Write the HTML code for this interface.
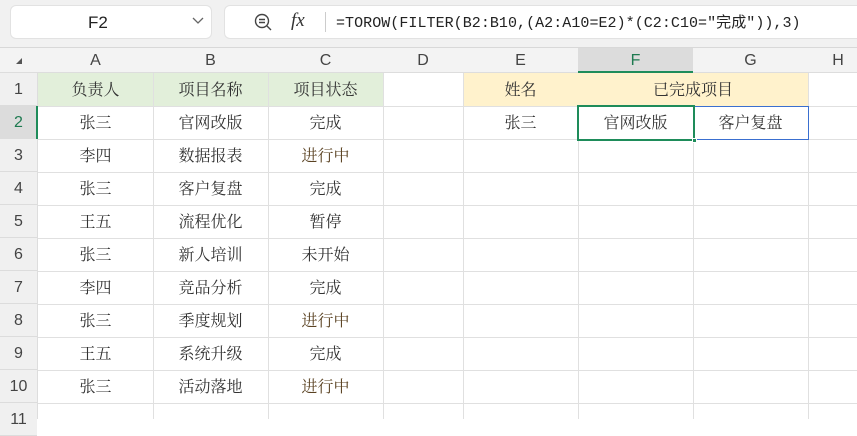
<!DOCTYPE html><html><head><meta charset="utf-8"><style>
body{margin:0;width:857px;height:419px;overflow:hidden;background:#fff;font-family:"Liberation Sans",sans-serif;position:relative}
.a{position:absolute;box-sizing:border-box}
.c{position:absolute;box-sizing:border-box;text-align:center;font-family:"Liberation Serif","Noto Serif CJK SC","Noto Serif CJK JP","Noto Serif CJK TC",serif;font-size:16px;color:#333;line-height:36px;height:33px}
.h{position:absolute;text-align:center;font-size:16px;color:#444;line-height:25px;top:48px;height:25px}
.r{position:absolute;left:0;width:37px;text-align:center;font-size:16px;color:#444;line-height:33px;height:32px;background:#f0f0f0;border-bottom:1px solid #dcdcdc}
</style></head><body>
<div class="a" style="left:0;top:0;width:857px;height:48px;background:#f1f1f1;border-bottom:1px solid #d8d8d8"></div>
<div class="a" style="left:10px;top:5px;width:202px;height:34px;background:#fff;border-radius:6px;border:1px solid #e2e2e2"></div>
<div class="a" style="left:88px;top:13px;font-size:17px;color:#222">F2</div>
<svg class="a" style="left:192px;top:17px" width="12" height="8"><path d="M1 1l5 5 5-5" stroke="#666" fill="none" stroke-width="1.3"/></svg>
<div class="a" style="left:224px;top:5px;width:640px;height:34px;background:#fff;border-radius:6px;border:1px solid #e2e2e2"></div>
<svg class="a" style="left:253px;top:12px" width="20" height="20"><circle cx="9" cy="9" r="6.5" stroke="#444" fill="none" stroke-width="1.4"/><path d="M6 7.5h6M6 10.5h6M14 14l4 4" stroke="#444" stroke-width="1.4"/></svg>
<div class="a" style="left:291px;top:10px;font-family:'Liberation Serif',serif;font-style:italic;font-size:19px;color:#333">fx</div>
<div class="a" style="left:325px;top:12px;width:1px;height:20px;background:#ccc"></div>
<div class="a" style="left:336px;top:11px;font-family:'Liberation Mono','Noto Sans CJK SC',monospace;font-size:15px;color:#222;letter-spacing:0.05px">=TOROW(FILTER(B2:B10,(A2:A10=E2)*(C2:C10="完成")),3)</div>
<!-- header row -->
<div class="a" style="left:0;top:48px;width:857px;height:25px;background:#f3f3f3;border-bottom:1px solid #ddd"></div>
<div class="a" style="left:578px;top:48px;width:115px;height:25px;background:#dcdcdc;border-bottom:2px solid #1e8c5a"></div>
<svg class="a" style="left:14px;top:56px" width="10" height="10"><path d="M8 2v6H2z" fill="#555"/></svg>
<div class="h" style="left:38px;width:115px">A</div><div class="h" style="left:153px;width:115px">B</div><div class="h" style="left:268px;width:115px">C</div><div class="h" style="left:383px;width:80px">D</div><div class="h" style="left:463px;width:115px">E</div><div class="h" style="left:578px;width:115px;color:#1e7a50">F</div><div class="h" style="left:693px;width:115px">G</div><div class="h" style="left:808px;width:60px">H</div>
<!-- row header col -->
<div class="a" style="left:0;top:73px;width:38px;height:346px;background:#f0f0f0;border-right:1px solid #ddd"></div>
<div class="r" style="top:73px">1</div><div class="r" style="top:106px;background:#dcdcdc;color:#1e7a50">2</div><div class="r" style="top:139px">3</div><div class="r" style="top:172px">4</div><div class="r" style="top:205px">5</div><div class="r" style="top:238px">6</div><div class="r" style="top:271px">7</div><div class="r" style="top:304px">8</div><div class="r" style="top:337px">9</div><div class="r" style="top:370px">10</div><div class="r" style="top:403px">11</div>
<div class="a" style="left:36px;top:106px;width:2px;height:33px;background:#1e8c5a"></div>
<!-- fills -->
<div class="a" style="left:38px;top:73px;width:345px;height:33px;background:#e2efda"></div>
<div class="a" style="left:463px;top:73px;width:345px;height:33px;background:#fff2cc"></div>
<!-- grid -->
<svg class="a" style="left:38px;top:73px" width="819" height="346">
<g stroke="#e0e0e0" stroke-width="1">
<path d="M0 33.5H819M0 66.5H819M0 99.5H819M0 132.5H819M0 165.5H819M0 198.5H819M0 231.5H819M0 264.5H819M0 297.5H819M0 330.5H819"/>
<path d="M115.5 0V346M230.5 0V346M345.5 0V346M425.5 0V346M540.5 33V346M655.5 33V346M770.5 0V346"/>
</g></svg>
<!-- data -->
<div class="c" style="left:38px;top:73px;width:115px">负责人</div><div class="c" style="left:153px;top:73px;width:115px">项目名称</div><div class="c" style="left:268px;top:73px;width:115px">项目状态</div>
<div class="c" style="left:463px;top:73px;width:115px">姓名</div><div class="c" style="left:578px;top:73px;width:230px">已完成项目</div>
<div class="c" style="left:38px;top:106px;width:115px">张三</div><div class="c" style="left:153px;top:106px;width:115px">官网改版</div><div class="c" style="left:268px;top:106px;width:115px">完成</div>
<div class="c" style="left:38px;top:139px;width:115px">李四</div><div class="c" style="left:153px;top:139px;width:115px">数据报表</div><div class="c" style="left:268px;top:139px;width:115px;color:#5a4222">进行中</div>
<div class="c" style="left:38px;top:172px;width:115px">张三</div><div class="c" style="left:153px;top:172px;width:115px">客户复盘</div><div class="c" style="left:268px;top:172px;width:115px">完成</div>
<div class="c" style="left:38px;top:205px;width:115px">王五</div><div class="c" style="left:153px;top:205px;width:115px">流程优化</div><div class="c" style="left:268px;top:205px;width:115px">暂停</div>
<div class="c" style="left:38px;top:238px;width:115px">张三</div><div class="c" style="left:153px;top:238px;width:115px">新人培训</div><div class="c" style="left:268px;top:238px;width:115px">未开始</div>
<div class="c" style="left:38px;top:271px;width:115px">李四</div><div class="c" style="left:153px;top:271px;width:115px">竞品分析</div><div class="c" style="left:268px;top:271px;width:115px">完成</div>
<div class="c" style="left:38px;top:304px;width:115px">张三</div><div class="c" style="left:153px;top:304px;width:115px">季度规划</div><div class="c" style="left:268px;top:304px;width:115px;color:#5a4222">进行中</div>
<div class="c" style="left:38px;top:337px;width:115px">王五</div><div class="c" style="left:153px;top:337px;width:115px">系统升级</div><div class="c" style="left:268px;top:337px;width:115px">完成</div>
<div class="c" style="left:38px;top:370px;width:115px">张三</div><div class="c" style="left:153px;top:370px;width:115px">活动落地</div><div class="c" style="left:268px;top:370px;width:115px;color:#5a4222">进行中</div>
<div class="c" style="left:463px;top:106px;width:115px">张三</div>
<div class="a" style="left:693px;top:106px;width:116px;height:34px;border:1px solid #3a6fd0"></div>
<div class="a" style="left:577px;top:105px;width:118px;height:36px;border:2px solid #1e8c5a"></div>
<div class="a" style="left:692px;top:138px;width:5px;height:5px;background:#1e8c5a;border:1px solid #fff"></div>
<div class="c" style="left:578px;top:106px;width:115px">官网改版</div><div class="c" style="left:693px;top:106px;width:115px">客户复盘</div>
</body></html>
